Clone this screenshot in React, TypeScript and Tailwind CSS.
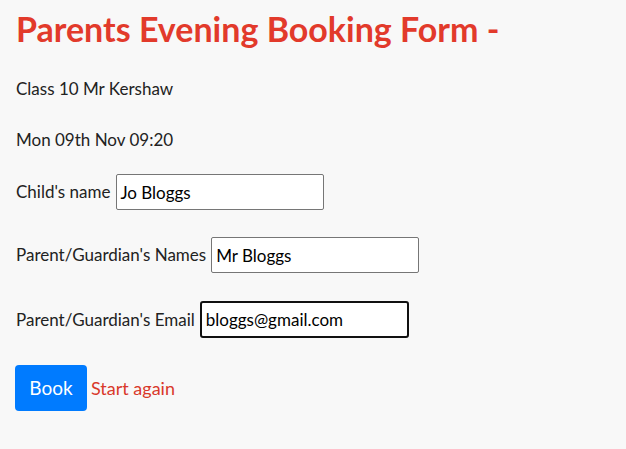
export default function App() {
  return (
    <main className="min-h-[449px] w-full bg-[#f8f8f8] px-4 font-['Lato',sans-serif] text-[#222]">
      <h1 className="pt-[8px] text-[34px] font-bold leading-[42px] text-[#e23a2b]">
        Parents Evening Booking Form -
      </h1>

      <p className="mt-[27px] text-[17px] leading-[24px]">Class 10 Mr Kershaw</p>
      <p className="mt-[27px] text-[17px] leading-[24px]">Mon 09th Nov 09:20</p>

      <form className="flex flex-col" onSubmit={(e) => e.preventDefault()}>
        <label className="mt-[22px] flex items-center text-[17px]">
          Child's name
          <input
            defaultValue="Jo Bloggs"
            className="ml-[6px] h-[36px] w-[208px] rounded-[2px] border border-[#767676] bg-white px-[3px] text-[17px] text-black outline-none"
          />
        </label>
        <label className="mt-[27px] flex items-center text-[17px]">
          Parent/Guardian's Names
          <input
            defaultValue="Mr Bloggs"
            className="ml-[5px] h-[36px] w-[208px] rounded-[2px] border border-[#767676] bg-white px-[4px] text-[17px] text-black outline-none"
          />
        </label>
        <label className="mt-[28px] flex items-center text-[17px]">
          Parent/Guardian's Email
          <input
            defaultValue="bloggs@gmail.com"
            className="ml-[5px] h-[37px] w-[209px] rounded-[3px] border-2 border-[#111] bg-white px-[4px] text-[17px] text-black outline-none"
          />
        </label>

        <div className="mt-[27px] flex items-center">
          <button
            type="submit"
            className="-ml-px h-[46px] w-[72px] rounded-[4px] bg-[#007bff] text-[19px] text-white"
          >
            Book
          </button>
          <a href="#" className="ml-[4px] text-[18px] text-[#d9392b]">
            Start again
          </a>
        </div>
      </form>
    </main>
  );
}
